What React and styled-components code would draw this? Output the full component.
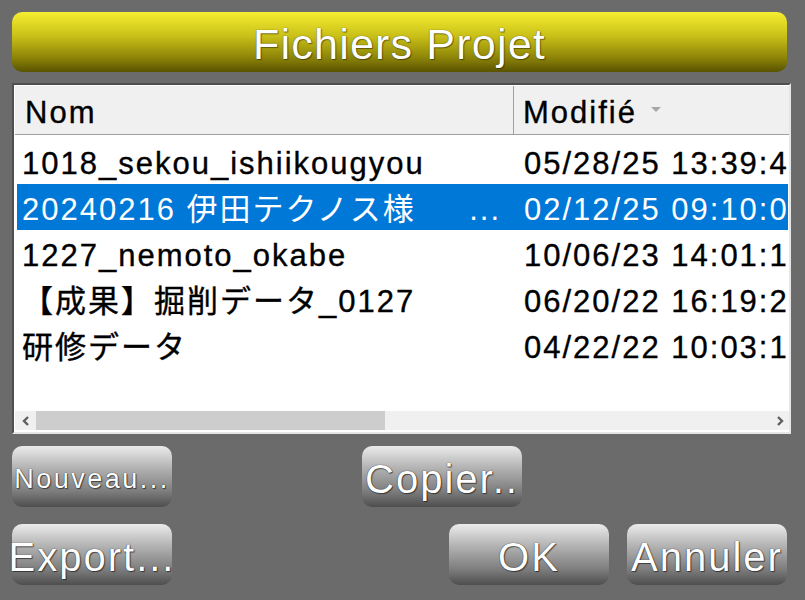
import styled, { createGlobalStyle } from "styled-components";

const files = [
  { name: "1018_sekou_ishiikougyou", date: "05/28/25 13:39:42" },
  { name: "20240216 伊田テクノス様", more: true, date: "02/12/25 09:10:05", selected: true },
  { name: "1227_nemoto_okabe", date: "10/06/23 14:01:18" },
  { name: "【成果】掘削データ_0127", date: "06/20/22 16:19:27" },
  { name: "研修データ", date: "04/22/22 10:03:14" },
];

const App = () => {
  return (
    <>
      <GlobalStyle />
      <Dialog>
        <TitleBar>Fichiers Projet</TitleBar>

        <FileTable>
          <Header>
            <HeadCell>Nom</HeadCell>
            <HeadCell $last>
              Modifié
              <SortArrow />
            </HeadCell>
          </Header>

          <Body>
            {files.map((f) => (
              <Row key={f.name} $selected={f.selected}>
                <NameCell>
                  <span>{f.name}</span>
                  {f.more && <span>...</span>}
                </NameCell>
                <DateCell>{f.date}</DateCell>
              </Row>
            ))}
          </Body>

          <ScrollBar>
            <ArrowButton>
              <svg width="10" height="12" viewBox="0 0 10 12">
                <polyline points="7,2 3,6 7,10" fill="none" stroke="#5f5f5f" strokeWidth="2.4" />
              </svg>
            </ArrowButton>
            <Track>
              <Thumb />
            </Track>
            <ArrowButton>
              <svg width="10" height="12" viewBox="0 0 10 12">
                <polyline points="3,2 7,6 3,10" fill="none" stroke="#5f5f5f" strokeWidth="2.4" />
              </svg>
            </ArrowButton>
          </ScrollBar>
        </FileTable>

        <ButtonRow $top={12} $gap={190}>
          <GrayButton $small>Nouveau...</GrayButton>
          <GrayButton>Copier..</GrayButton>
        </ButtonRow>

        <ButtonRow $top={17} $gap={18}>
          <GrayButton>Export...</GrayButton>
          <Spacer />
          <GrayButton>OK</GrayButton>
          <GrayButton>Annuler</GrayButton>
        </ButtonRow>
      </Dialog>
    </>
  );
};

export default App;

const GlobalStyle = createGlobalStyle`
  body {
    margin: 0;
    background: #6b6b6b;
    font-family: "Liberation Sans", Arial, "Noto Sans CJK JP", sans-serif;
  }
`;

const Dialog = styled.div`
  width: 805px;
  height: 600px;
  box-sizing: border-box;
  padding: 12px 14px 15px 12px;
  display: flex;
  flex-direction: column;
`;

const TitleBar = styled.div`
  height: 60px;
  box-sizing: border-box;
  padding-top: 4px;
  margin-right: 4px;
  border-radius: 10px;
  background: linear-gradient(#f6ee30 0%, #c9c018 40%, #8f8608 75%, #5a5300 100%);
  display: flex;
  align-items: center;
  justify-content: center;
  color: #fff;
  font-size: 43px;
  letter-spacing: 1.2px;
  text-shadow: 0 0 1px #3a3500, 1px 1px 1px rgba(0, 0, 0, 0.4);
`;

const FileTable = styled.div`
  margin-top: 11px;
  height: 351px;
  box-sizing: border-box;
  border: 2px solid;
  border-color: #4f4f4f #e6e6e6 #e6e6e6 #4f4f4f;
  padding: 1px 0 2px 1px;
  background: #fff;
  display: flex;
  flex-direction: column;
  overflow: hidden;
`;

const Header = styled.div`
  height: 49px;
  flex: none;
  display: grid;
  grid-template-columns: 499px 1fr;
  background: #f0f0f0;
  border-bottom: 1px solid #a0a0a0;
  box-sizing: border-box;
`;

const HeadCell = styled.div`
  display: flex;
  align-items: center;
  box-sizing: border-box;
  padding-top: 6px;
  padding-left: ${(p) => (p.$last ? "9px" : "10px")};
  border-right: ${(p) => (p.$last ? "none" : "1px solid #a0a0a0")};
  font-size: 31px;
  line-height: 42px;
  letter-spacing: 2px;
  color: #000;
  -webkit-text-stroke: 0.35px #000;
  white-space: nowrap;
`;

const SortArrow = styled.span`
  width: 0;
  height: 0;
  margin-left: 14px;
  margin-top: -8px;
  border-left: 5px solid transparent;
  border-right: 5px solid transparent;
  border-top: 5px solid #a8a8a8;
`;

const Body = styled.div`
  flex: 1;
  padding: 3px 1px 0 2px;
`;

const Row = styled.div`
  height: 46px;
  box-sizing: border-box;
  padding-top: 3px;
  display: grid;
  grid-template-columns: 498px 1fr;
  font-size: 31px;
  line-height: 46px;
  letter-spacing: 2px;
  white-space: nowrap;
  color: ${(p) => (p.$selected ? "#fff" : "#000")};
  -webkit-text-stroke: ${(p) => (p.$selected ? "0" : "0.35px #000")};
  background: ${(p) => (p.$selected ? "#0078d7" : "transparent")};
`;

const NameCell = styled.div`
  padding: 0 14px 0 5px;
  overflow: hidden;
  display: flex;
  justify-content: space-between;
`;

const DateCell = styled.div`
  padding-left: 9px;
  overflow: hidden;
`;

const ScrollBar = styled.div`
  height: 19px;
  flex: none;
  display: flex;
  background: #f0f0f0;
  margin-right: -1px;
`;

const ArrowButton = styled.div`
  width: 21px;
  display: flex;
  align-items: center;
  justify-content: center;
`;

const Track = styled.div`
  flex: 1;
  display: flex;
`;

const Thumb = styled.div`
  width: 349px;
  background: #cdcdcd;
`;

const ButtonRow = styled.div`
  margin-top: ${(p) => p.$top}px;
  margin-right: 4px;
  display: flex;
  gap: ${(p) => p.$gap}px;
`;

const Spacer = styled.div`
  flex: 1;
`;

const GrayButton = styled.button`
  width: 160px;
  height: 61px;
  box-sizing: border-box;
  padding: 5px 0 0;
  border: none;
  border-radius: 10px;
  background: linear-gradient(#ebebeb 0%, #b4b4b4 35%, #7c7c7c 75%, #4e4e4e 100%);
  color: #fff;
  font-family: "Liberation Sans", Arial, sans-serif;
  font-size: ${(p) => (p.$small ? "27px" : "40px")};
  letter-spacing: ${(p) => (p.$small ? "2.5px" : "2px")};
  white-space: nowrap;
  overflow: visible;
  display: flex;
  align-items: center;
  justify-content: center;
  text-shadow: 0 0 1px #000, 1px 1px 1px rgba(0, 0, 0, 0.5);
`;
